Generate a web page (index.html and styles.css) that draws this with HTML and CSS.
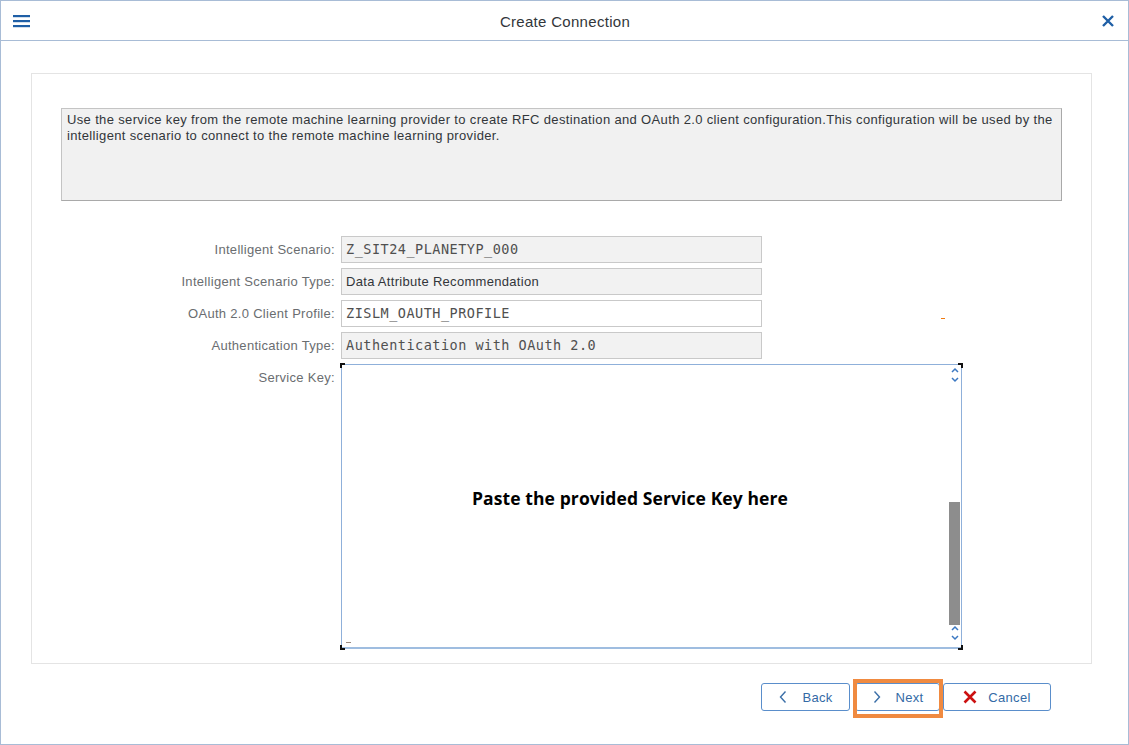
FILE: index.html
```html
<!DOCTYPE html>
<html lang="en">
<head>
<meta charset="utf-8">
<title>Create Connection</title>
<link rel="stylesheet" href="styles.css">
</head>
<body>
<div class="window">
  <header class="header">
    <button class="icon-btn menu" aria-label="Menu">
      <svg width="18" height="14" viewBox="0 0 18 14"><rect x="0" y="1" width="17" height="2.2" fill="#1f5fa6"/><rect x="0" y="6" width="17" height="2.2" fill="#1f5fa6"/><rect x="0" y="11" width="17" height="2.2" fill="#1f5fa6"/></svg>
    </button>
    <h1 class="title">Create Connection</h1>
    <button class="icon-btn close" aria-label="Close">
      <svg width="14" height="14" viewBox="0 0 14 14"><path d="M2 2 L12 12 M12 2 L2 12" stroke="#1f5fa6" stroke-width="2.4" fill="none"/></svg>
    </button>
  </header>
  <main class="content">
    <section class="panel">
      <div class="info">Use the service key from the remote machine learning provider to create RFC destination and OAuth 2.0 client configuration.This configuration will be used by the intelligent scenario to connect to the remote machine learning provider.</div>
      <div class="form">
        <label class="lbl">Intelligent Scenario:</label>
        <div class="field ro mono">Z_SIT24_PLANETYP_000</div>
        <label class="lbl">Intelligent Scenario Type:</label>
        <div class="field ro">Data Attribute Recommendation</div>
        <label class="lbl">OAuth 2.0 Client Profile:</label>
        <div class="field mono">ZISLM_OAUTH_PROFILE</div>
        <label class="lbl">Authentication Type:</label>
        <div class="field ro mono">Authentication with OAuth 2.0</div>
        <label class="lbl">Service Key:</label>
        <div class="keybox">
          <span class="corner tl"></span><span class="corner tr"></span><span class="corner bl"></span><span class="corner br"></span>
          <div class="keytext">Paste the provided Service Key here</div>
          <div class="scroll">
            <span class="chev">
              <svg width="10" height="16" viewBox="0 0 10 16"><path d="M2 5 L5 2 L8 5" stroke="#3b78c2" stroke-width="1.5" fill="none"/><path d="M2 11 L5 14 L8 11" stroke="#3b78c2" stroke-width="1.5" fill="none"/></svg>
            </span>
            <span class="track"><span class="thumb"></span></span>
            <span class="chev">
              <svg width="10" height="16" viewBox="0 0 10 16"><path d="M2 5 L5 2 L8 5" stroke="#3b78c2" stroke-width="1.5" fill="none"/><path d="M2 11 L5 14 L8 11" stroke="#3b78c2" stroke-width="1.5" fill="none"/></svg>
            </span>
          </div>
          <span class="dots"></span>
        </div>
      </div>
      <span class="dash"></span>
    </section>
    <footer class="actions">
      <button class="btn">
        <svg width="10" height="14" viewBox="0 0 10 14"><path d="M7.5 1.5 L2.5 7 L7.5 12.5" stroke="#3b6fa8" stroke-width="1.4" fill="none"/></svg>
        <span>Back</span>
      </button>
      <button class="btn next">
        <svg width="10" height="14" viewBox="0 0 10 14"><path d="M2.5 1.5 L7.5 7 L2.5 12.5" stroke="#3b6fa8" stroke-width="1.4" fill="none"/></svg>
        <span>Next</span>
      </button>
      <button class="btn cancel">
        <svg width="14" height="14" viewBox="0 0 14 14"><path d="M1.5 1.5 L12.5 12.5 M12.5 1.5 L1.5 12.5" stroke="#cc1111" stroke-width="2.6" fill="none"/></svg>
        <span>Cancel</span>
      </button>
    </footer>
  </main>
</div>
</body>
</html>
```
FILE: styles.css
```css
* { box-sizing: border-box; }
html, body { margin: 0; padding: 0; background: #ffffff; }
body { font-family: "Liberation Sans", Arial, sans-serif; color: #32363a; letter-spacing: 0.3px; }

.window {
  width: 1129px;
  height: 745px;
  border: 1px solid #a8bcd6;
  display: flex;
  flex-direction: column;
  background: #fff;
}

.header {
  height: 40px;
  border-bottom: 1px solid #a8bcd6;
  display: flex;
  align-items: center;
  justify-content: space-between;
  padding: 0 11px 0 12px;
}
.icon-btn {
  border: 0;
  background: transparent;
  padding: 0;
  width: 18px;
  height: 16px;
  display: flex;
  align-items: center;
  justify-content: center;
}
.title {
  margin: 0;
  font-size: 15px;
  font-weight: normal;
  color: #32363a;
  padding-top: 1px;
}

.content {
  flex: 1;
  padding: 32px 36px 0 30px;
  display: flex;
  flex-direction: column;
}

.panel {
  position: relative;
  border: 1px solid #e4e4e4;
  height: 591px;
  padding: 34px 29px 14px 29px;
}

.info {
  height: 93px;
  background: #f1f1f1;
  border: 1px solid #c4c4c4;
  border-right-color: #a9a9a9;
  border-bottom-color: #a9a9a9;
  font-size: 13px;
  line-height: 16px;
  padding: 3px 5px;
  color: #32363a;
  letter-spacing: 0.35px;
}

.form {
  margin-top: 35px;
  margin-left: 101px;
  display: grid;
  grid-template-columns: 173px auto;
  column-gap: 6px;
  row-gap: 5px;
  justify-content: start;
}
.lbl {
  text-align: right;
  font-size: 13px;
  color: #6a6d70;
  line-height: 27px;
  white-space: nowrap;
}
.field {
  width: 421px;
  height: 27px;
  border: 1px solid #c9c9c9;
  background: #fff;
  font-size: 13px;
  line-height: 25px;
  padding: 0 4px;
  color: #32363a;
}
.field.ro { background: #f2f2f2; }
.field.mono {
  font-family: "DejaVu Sans Mono", "Liberation Mono", monospace;
  font-size: 13.5px;
  letter-spacing: 0.5px;
  color: #505050;
}

.keybox {
  position: relative;
  width: 621px;
  height: 285px;
  border: 1px solid #8fb0da;
  border-bottom: 2px solid #9fbde0;
  display: flex;
  align-items: center;
  justify-content: center;
}
.keytext {
  font-family: "Open Sans", "Noto Sans", sans-serif;
  font-weight: 700;
  font-size: 17.5px;
  letter-spacing: 0.1px;
  color: #000;
  margin-top: -17px;
  margin-right: 43px;
}
.scroll {
  position: absolute;
  right: 1px;
  top: 2px;
  bottom: 2px;
  width: 11px;
  display: flex;
  flex-direction: column;
  align-items: center;
}
.chev { display: flex; height: 20px; align-items: flex-start; }
.track { flex: 1; width: 11px; display: flex; flex-direction: column; justify-content: flex-end; }
.thumb { height: 123px; background: #8d8d8d; }

.corner { position: absolute; width: 5px; height: 5px; border: 0 solid #111; }
.corner.tl { left: -2px; top: -2px; border-left-width: 2px; border-top-width: 2px; }
.corner.tr { right: -2px; top: -2px; border-right-width: 2px; border-top-width: 2px; }
.corner.bl { left: -2px; bottom: -3px; border-left-width: 2px; border-bottom-width: 2px; }
.corner.br { right: -2px; bottom: -3px; border-right-width: 2px; border-bottom-width: 2px; }
.dots { position: absolute; left: 4px; bottom: 4px; width: 5px; height: 1px; background: #9a8a80; }

.dash {
  position: absolute;
  left: 909px;
  top: 244px;
  width: 4px;
  height: 1px;
  background: #f07a10;
}

.actions {
  display: flex;
  justify-content: flex-end;
  gap: 4px;
  margin-top: 19px;
  padding-right: 41px;
}
.btn {
  position: relative;
  height: 28px;
  border: 1px solid #5a8ecb;
  border-radius: 3px;
  background: #fff;
  display: flex;
  align-items: center;
  justify-content: center;
  gap: 14px;
  font-family: "Liberation Sans", Arial, sans-serif;
  font-size: 13px;
  letter-spacing: 0.3px;
  color: #346aa6;
  padding: 0;
  width: 89px;
}
.btn.next { width: 85px; margin-left: 1px; }
.btn.cancel { width: 108px; gap: 11px; margin-left: -1px; }
.btn.next::after {
  content: "";
  position: absolute;
  left: -3px;
  top: -5px;
  right: -4px;
  bottom: -8px;
  border: 4px solid #f08a40;
}
```
